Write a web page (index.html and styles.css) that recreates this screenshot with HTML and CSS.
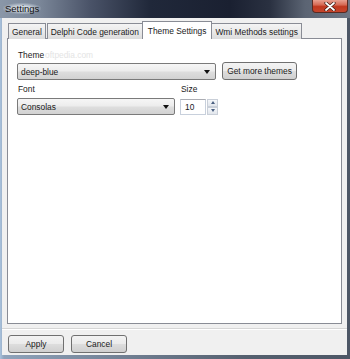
FILE: index.html
```html
<!DOCTYPE html>
<html>
<head>
<meta charset="utf-8">
<link rel="stylesheet" href="styles.css">
</head>
<body>
<div class="window">
  <div class="titlebar">
    <span class="title">Settings</span>
    <div class="close">
      <svg width="12" height="9" viewBox="0 0 12 9"><path d="M2 1 L10 8 M10 1 L2 8" stroke="#3a1a14" stroke-width="3.2" stroke-linecap="round"/><path d="M2 1 L10 8 M10 1 L2 8" stroke="#ffffff" stroke-width="1.8" stroke-linecap="round"/></svg>
    </div>
  </div>
  <div class="client">
    <div class="tabs">
      <div class="tab">General</div>
      <div class="tab">Delphi Code generation</div>
      <div class="tab selected">Theme Settings</div>
      <div class="tab">Wmi Methods settings</div>
    </div>
    <div class="panel">
      <div class="label-row"><span class="label">Theme</span><span class="watermark">oftpedia.com</span></div>
      <div class="row">
        <div class="combo wide"><span>deep-blue</span><span class="arrow"></span></div>
        <div class="btn more">Get more themes</div>
      </div>
      <div class="row labels">
        <span class="label font-label">Font</span>
        <span class="label">Size</span>
      </div>
      <div class="row">
        <div class="combo narrow"><span>Consolas</span><span class="arrow"></span></div>
        <div class="spin">
          <div class="spin-edit">10</div>
          <div class="spin-btns">
            <div class="spin-btn"><span class="up"></span></div>
            <div class="spin-btn"><span class="down"></span></div>
          </div>
        </div>
      </div>
    </div>
    <div class="sep"></div>
    <div class="buttons">
      <div class="btn action">Apply</div>
      <div class="btn action">Cancel</div>
    </div>
  </div>
</div>
</body>
</html>
```

FILE: styles.css
```css
* { box-sizing: border-box; }
html, body { margin: 0; padding: 0; }
body {
  width: 350px;
  height: 359px;
  overflow: hidden;
  font-family: "Liberation Sans", Arial, sans-serif;
  font-size: 8.4px;
  color: #1a1a1a;
}
.window {
  width: 350px;
  height: 359px;
  display: flex;
  flex-direction: column;
  background: linear-gradient(90deg, #a9c2dd 0px, #8fa3bb 4px, #6d7b8e 40%, #55606f 70%, #4d5766 100%);
}
.titlebar {
  height: 18px;
  flex: none;
  display: flex;
  justify-content: space-between;
  align-items: flex-start;
  background: linear-gradient(90deg, #8a97a8 0px, #7a8698 40px, #4a5368 90px, #20283a 150px, #1a2031 230px, #2a3141 270px, #5b6473 305px, #6e7684 350px);
}
.title {
  font-family: "Liberation Sans", Arial, sans-serif;
  font-size: 9.5px;
  color: #111;
  margin: 3px 0 0 3px;
  padding: 0 2px;
  background: radial-gradient(ellipse at center, rgba(220,228,236,0.85) 30%, rgba(220,228,236,0) 75%);
}
.close {
  width: 36px;
  height: 13px;
  margin-right: 2px;
  border: 1px solid #5a2a22;
  border-top: none;
  border-radius: 0 0 4px 4px;
  background: linear-gradient(180deg, #e8a090 0%, #d66a55 40%, #c0381f 55%, #c6452c 100%);
  display: flex;
  align-items: center;
  justify-content: center;
}
.close svg { display: block; }
.client {
  flex: 1;
  margin: 0 3px 4px 2px;
  background: #f0f0f0;
  display: flex;
  flex-direction: column;
  padding: 4px 5px 0 5px;
}
.tabs {
  display: flex;
  align-items: flex-end;
  height: 17px;
  padding-left: 1px;
  position: relative;
  z-index: 1;
  margin-bottom: -1px;
}
.tab {
  height: 16px;
  padding: 2px 3px 0 3px;
  border: 1px solid #898c95;
  border-bottom: none;
  margin-right: 1px;
  background: linear-gradient(180deg, #f4f4f4 0%, #eaeaea 50%, #dcdcdc 100%);
  white-space: nowrap;
  line-height: 12px;
}
.tab.selected {
  height: 18px;
  margin: 0 -1px 0 -2px;
  padding: 3px 5px 0 5px;
  background: #ffffff;
}
.panel {
  height: 286px;
  border: 1px solid #898c95;
  background: #fff;
  padding: 9px 10px;
}
.label-row { display: flex; align-items: center; height: 14px; }
.label { line-height: 12px; }
.watermark { color: #e4e4e4; margin-left: 1px; }
.row { display: flex; align-items: center; }
.labels { margin-top: 2px; height: 14px; }
.font-label { width: 163px; }
.combo {
  height: 17px;
  border: 1px solid #7a7a7a;
  border-radius: 2px;
  background: linear-gradient(180deg, #f6f6f6 0%, #ececec 48%, #dedede 52%, #d2d2d2 100%);
  display: flex;
  align-items: center;
  justify-content: space-between;
  padding: 0 5px 0 3px;
  margin-left: -1px;
}
.combo.wide { width: 199px; margin-top: 1px; }
.combo.narrow { width: 158px; margin-top: 2px; }
.arrow {
  width: 0; height: 0;
  border-left: 3.5px solid transparent;
  border-right: 3.5px solid transparent;
  border-top: 4px solid #111;
}
.btn {
  border: 1px solid #707070;
  border-radius: 3px;
  background: linear-gradient(180deg, #f3f3f3 0%, #ebebeb 48%, #dddddd 52%, #cfcfcf 100%);
  display: flex;
  align-items: center;
  justify-content: center;
  white-space: nowrap;
}
.btn.more { width: 75px; height: 18px; margin-left: 6px; }
.spin { display: flex; margin-left: 5px; margin-top: 2px; }
.spin-edit {
  width: 26px;
  height: 16px;
  border: 1px solid #c8d0dc;
  border-top-color: #abadb3;
  padding: 2px 0 0 4px;
  line-height: 11px;
}
.spin-btns { display: flex; flex-direction: column; margin-left: 1px; }
.spin-btn {
  width: 11px;
  height: 8px;
  border: 1px solid #c9cfd8;
  background: linear-gradient(180deg, #f5f7fa, #e2e6ec);
  display: flex;
  align-items: center;
  justify-content: center;
}
.up { width:0;height:0;border-left:2.5px solid transparent;border-right:2.5px solid transparent;border-bottom:3px solid #4a5f80; }
.down { width:0;height:0;border-left:2.5px solid transparent;border-right:2.5px solid transparent;border-top:3px solid #4a5f80; }
.sep {
  margin: 4px -5px 0 -5px;
  border-top: 1px solid #d6d6d6;
  border-bottom: 1px solid #ffffff;
}
.buttons { display: flex; gap: 7px; padding: 5px 0 0 1px; }
.btn.action { width: 56px; height: 18px; }
```
